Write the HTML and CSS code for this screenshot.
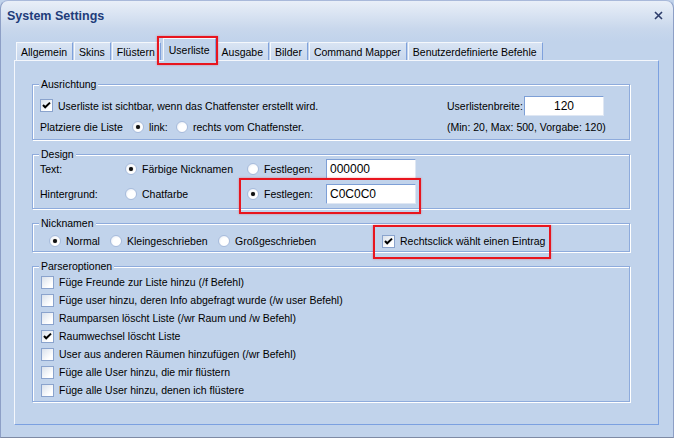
FILE: index.html
```html
<!DOCTYPE html>
<html>
<head>
  <title>System Settings</title>
  <link rel="stylesheet" href="styles.css">
</head>
<body>
  <div class="window">
    <div class="titlebar">
      <span class="title">System Settings</span>
      <svg class="close" width="9" height="9" viewBox="0 0 9 9"><path d="M1 1L8 8M8 1L1 8" stroke="#2d3d6b" stroke-width="1.6"/></svg>
    </div>

    <div class="tabs">
      <div class="tab">Allgemein</div>
      <div class="tab">Skins</div>
      <div class="tab">Flüstern</div>
      <div class="tab active">Userliste</div>
      <div class="tab">Ausgabe</div>
      <div class="tab">Bilder</div>
      <div class="tab">Command Mapper</div>
      <div class="tab">Benutzerdefinierte Befehle</div>
    </div>

    <div class="panel">
      <div class="group g-align">
        <span class="caption">Ausrichtung</span>
        <div class="col-left">
          <div class="row">
            <label class="check"><span class="box on"><svg width="11" height="11" viewBox="0 0 11 11"><path d="M2 5l2.2 2.3L9 2.6" fill="none" stroke="#000" stroke-width="2"/></svg></span>Userliste ist sichtbar, wenn das Chatfenster erstellt wird.</label>
          </div>
          <div class="row">
            <span class="w92">Platziere die Liste</span>
            <label class="opt w44"><span class="dot on"></span>link:</label>
            <label class="opt"><span class="dot"></span>rechts vom Chatfenster.</label>
          </div>
        </div>
        <div class="col-right">
          <div class="row between">
            <span>Userlistenbreite:</span>
            <span class="field center w80">120</span>
          </div>
          <div class="row">(Min: 20, Max: 500, Vorgabe: 120)</div>
        </div>
      </div>

      <div class="group g-design">
        <span class="caption">Design</span>
        <div class="row tall">
          <span class="w85">Text:</span>
          <label class="opt w122"><span class="dot on"></span>Färbige Nicknamen</label>
          <label class="opt w79"><span class="dot"></span>Festlegen:</label>
          <span class="field w90">000000</span>
        </div>
        <div class="row tall">
          <span class="w85">Hintergrund:</span>
          <label class="opt w122"><span class="dot"></span>Chatfarbe</label>
          <span class="hl hl-design">
            <label class="opt w79"><span class="dot on"></span>Festlegen:</label>
            <span class="field w90">C0C0C0</span>
          </span>
        </div>
      </div>

      <div class="group g-nick">
        <span class="caption">Nicknamen</span>
        <div class="row wide">
          <label class="opt w61"><span class="dot on"></span>Normal</label>
          <label class="opt w108"><span class="dot"></span>Kleingeschrieben</label>
          <label class="opt w164"><span class="dot"></span>Großgeschrieben</label>
          <label class="check hl hl-nick"><span class="box on"><svg width="11" height="11" viewBox="0 0 11 11"><path d="M2 5l2.2 2.3L9 2.6" fill="none" stroke="#000" stroke-width="2"/></svg></span>Rechtsclick wählt einen Eintrag</label>
        </div>
      </div>

      <div class="group g-parser">
        <span class="caption">Parseroptionen</span>
        <div class="row short"><label class="check"><span class="box"></span>Füge Freunde zur Liste hinzu (/f Befehl)</label></div>
        <div class="row short"><label class="check"><span class="box"></span>Füge user hinzu, deren Info abgefragt wurde (/w user Befehl)</label></div>
        <div class="row short"><label class="check"><span class="box"></span>Raumparsen löscht Liste (/wr Raum und /w Befehl)</label></div>
        <div class="row short"><label class="check"><span class="box on"><svg width="11" height="11" viewBox="0 0 11 11"><path d="M2 5l2.2 2.3L9 2.6" fill="none" stroke="#000" stroke-width="2"/></svg></span>Raumwechsel löscht Liste</label></div>
        <div class="row short"><label class="check"><span class="box"></span>User aus anderen Räumen hinzufügen (/wr Befehl)</label></div>
        <div class="row short"><label class="check"><span class="box"></span>Füge alle User hinzu, die mir flüstern</label></div>
        <div class="row short"><label class="check"><span class="box"></span>Füge alle User hinzu, denen ich flüstere</label></div>
      </div>
    </div>
  </div>
</body>
</html>
```

FILE: styles.css
```css
/* System Settings dialog */

body {
  margin: 0;
  font-family: "Liberation Sans", Arial, sans-serif;
  font-size: 10.5px;
  color: #000;
  background: #c1d3eb;
}

.window {
  width: 674px;
  height: 438px;
  box-sizing: border-box;
  border: 1px solid #8d9fc6;
  border-top-color: #a9b9da;
  border-bottom-color: #7e8aa4;
  border-radius: 8px 8px 0 0;
  background: linear-gradient(#e9eff8, #c8d7ec 28px, #c1d3eb 40px);
}

.titlebar {
  height: 37px;
  box-sizing: border-box;
  display: flex;
  justify-content: space-between;
  align-items: flex-start;
  padding: 7px 10px 0 6px;
}

.title {
  font-size: 12.5px;
  font-weight: bold;
  line-height: 16px;
  color: #213c7a;
}

.close {
  margin-top: 3px;
}

/* tabs */

.tabs {
  display: flex;
  align-items: flex-end;
  height: 22px;
  margin-left: 15px;
  position: relative;
  z-index: 1;
}

.tab {
  height: 18px;
  box-sizing: border-box;
  padding: 2px 5px 0 4px;
  line-height: 15px;
  white-space: nowrap;
  background: linear-gradient(#d9e4f3, #c7d7ed);
  border: 1px solid #f5f8fc;
  border-right-color: #7fa1dc;
  border-bottom: none;
  margin-right: 1px;
}

.tab.active {
  height: 23px;
  margin: 0 1px -1px 1px;
  padding: 4px 5px 0;
  background: #c1d3eb;
  position: relative;
}

.tab.active::after {
  content: '';
  position: absolute;
  left: -7px;
  top: -3px;
  right: -3px;
  bottom: -4px;
  border: 2px solid #e8151e;
  box-shadow: 0 0 2px rgba(232, 21, 30, 0.4);
}

/* panel and groups */

.panel {
  margin: 0 14px 0 13px;
  border: 1px solid #7ba0e0;
  border-top-color: #f4f7fc;
  border-left-color: #f4f7fc;
  padding: 23px 28px 22px 17px;
}

.group {
  position: relative;
  box-sizing: border-box;
  border: 1px solid #8eabdc;
  box-shadow: inset 1px 1px 0 #fff, 1px 1px 0 #fff;
  margin-bottom: 14px;
}

.group:last-child {
  margin-bottom: 0;
}

.caption {
  position: absolute;
  top: -7px;
  left: 6px;
  padding: 0 2px;
  line-height: 13px;
  background: #c1d3eb;
}

.g-align {
  height: 56px;
  display: flex;
  padding: 10px 0 0 7px;
}

.g-design {
  height: 55px;
  padding: 1px 0 0 7px;
}

.g-nick {
  height: 29px;
  padding: 7px 0 0 16px;
}

.g-parser {
  height: 136px;
  padding: 6px 0 0 8px;
}

.col-left {
  flex: 1;
}

.col-right {
  width: 157px;
  margin-right: 25px;
}

.row {
  display: flex;
  align-items: center;
  height: 21px;
  white-space: nowrap;
}

.row.tall {
  height: 25px;
}

.row.wide {
  height: 20px;
}

.row.short {
  height: 18px;
}

.row.between {
  justify-content: space-between;
}

/* controls */

.check,
.opt {
  display: inline-flex;
  align-items: center;
  white-space: nowrap;
}

.box {
  width: 13px;
  height: 13px;
  box-sizing: border-box;
  flex: none;
  display: inline-flex;
  align-items: center;
  justify-content: center;
  margin-right: 5px;
  border: 1px solid #8aa3cd;
  background: linear-gradient(135deg, #d9e1ec, #fff 75%);
}

.dot {
  width: 12px;
  height: 12px;
  box-sizing: border-box;
  flex: none;
  position: relative;
  margin-right: 5px;
  border-radius: 50%;
  border: 1px solid #a8bcdc;
  background: radial-gradient(circle at 60% 60%, #fff 45%, #dde5f1);
}

.dot.on::after {
  content: '';
  position: absolute;
  left: 3px;
  top: 3px;
  width: 4px;
  height: 4px;
  border-radius: 50%;
  background: #111;
  box-shadow: 0 0 1px #555;
}

.field {
  height: 20px;
  box-sizing: border-box;
  flex: none;
  padding: 0 3px;
  line-height: 18px;
  font-size: 12px;
  background: #fff;
  border: 1px solid #7d9fd6;
  border-right-color: #dfe7f3;
  border-bottom-color: #dfe7f3;
}

.field.center {
  text-align: center;
}

/* red highlight marks */

.hl {
  position: relative;
  display: inline-flex;
  align-items: center;
}

.hl::after {
  content: '';
  position: absolute;
  border: 2px solid #e8151e;
  box-shadow: 0 0 2px rgba(232, 21, 30, 0.4);
}

.hl-design::after {
  left: -8px;
  top: -6px;
  right: -5px;
  bottom: -10px;
}

.hl-nick::after {
  left: -9px;
  top: -10px;
  right: -6px;
  bottom: -11px;
}

/* widths */

.w44 { width: 44px; }
.w61 { width: 61px; }
.w79 { width: 79px; }
.w80 { width: 80px; }
.w85 { width: 85px; }
.w90 { width: 90px; }
.w92 { width: 92px; }
.w108 { width: 108px; }
.w122 { width: 122px; }
.w164 { width: 164px; }
```
